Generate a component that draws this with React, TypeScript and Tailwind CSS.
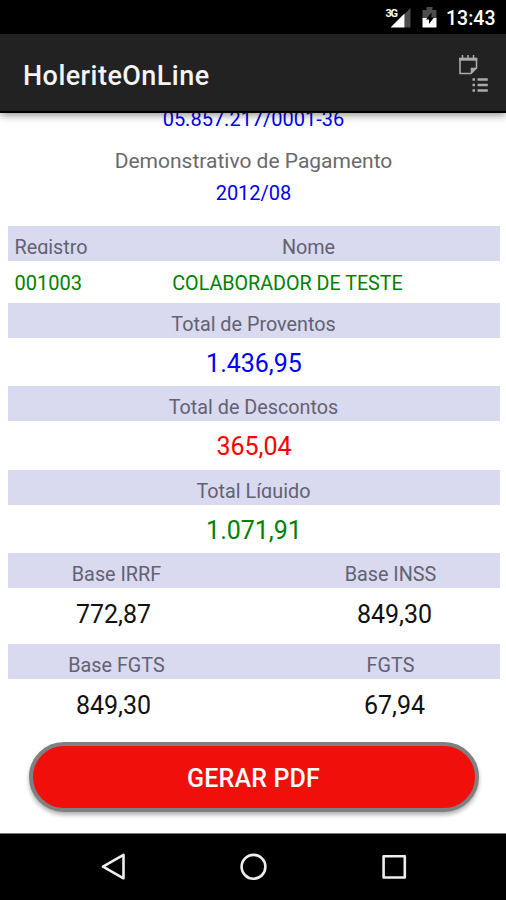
import type { ReactNode } from 'react'
import { clsx } from 'clsx'

const totals = [
  { label: 'Total de Proventos', value: '1.436,95', color: 'text-[#0000f0]' },
  { label: 'Total de Descontos', value: '365,04', color: 'text-[#fb0000]' },
  { label: 'Total Líquido', value: '1.071,91', color: 'text-[#008000]' },
]

const bases = [
  [
    { label: 'Base IRRF', value: '772,87' },
    { label: 'Base INSS', value: '849,30' },
  ],
  [
    { label: 'Base FGTS', value: '849,30' },
    { label: 'FGTS', value: '67,94' },
  ],
]

function StatusBar() {
  return (
    <div className="flex h-[34px] shrink-0 items-center justify-end bg-black pr-[11px] text-white">
      <svg width="74" height="34" viewBox="371 0 74 34" className="shrink-0">
        {/* signal */}
        <path d="M404.500 14l6-6v19.500h-6z" fill="#4d4d4d" />
        <path d="M390.500 27.500l14-14v14z" fill="#fff" />
        <text x="385.500" y="16.500" fontSize="11" fontWeight="700" fontFamily="Roboto, sans-serif" fill="#fff" textLength="12.500">
          3G
        </text>
        {/* charging battery */}
        <path d="M422.500 18v-8h4v-3h6v3h4v8z" fill="#4d4d4d" />
        <path d="M422.500 18h14v9.500h-14z" fill="#fff" />
        <path d="M431.500 12.500l-5.500 7h3v4.500l5-6.500h-2.500z" fill="#000" />
      </svg>
      <span className="w-[50px] pt-[3px] pl-[1px] text-[19.500px] font-medium whitespace-nowrap">13:43</span>
    </div>
  )
}

function AppBar() {
  return (
    <header className="z-10 flex h-[79px] shrink-0 items-center justify-between border-b-2 border-black bg-[#222] pl-[23px] pr-[16px] shadow-[0_2px_8px_rgba(0,0,0,0.45)]">
      <h1 className="pt-[8px] text-[27px] font-medium tracking-[0.45px] text-[#f4f4f4]">HoleriteOnLine</h1>
      <svg width="32" height="41" viewBox="458 52 32 41" fill="none" stroke="#aaa">
        <path d="M460 58.500v15h11l5.500-5.500v-9.500z" strokeWidth="1.600" />
        <path d="M459.200 59.300h18" strokeWidth="2.800" />
        <path d="M462.500 55v4M468 55v4M473.500 55v4" strokeWidth="1.500" />
        <path d="M471 73.500v-5.500h5.500z" fill="#aaa" strokeWidth="0.600" />
        <path d="M472.500 79.500h2.500M472.500 85h2.500M472.500 90.500h2.500M477.500 79.500h10.300M477.500 85h10.300M477.500 90.500h10.300" strokeWidth="2.300" />
      </svg>
    </header>
  )
}

// Labels sit low in the bar, so descenders get cut by the inner box
function Bar({ children }: { children: ReactNode }) {
  return (
    <div className="h-[35px] bg-[#d9d9f0] text-[19.800px] text-[#626272]">
      <div className="flex h-[28px] overflow-hidden leading-[43px]">{children}</div>
    </div>
  )
}

function NavBar() {
  return (
    <nav className="flex h-[67px] shrink-0 items-center justify-center border-t border-[#777] bg-black">
      <svg width="320" height="40" viewBox="93 847 320 40" fill="none" stroke="#eee" strokeWidth="2.600" strokeLinejoin="round">
        <path d="M123.500 854.800v23.500l-20.500-11.700z" />
        <circle cx="253.500" cy="866.800" r="11.900" />
        <rect x="383.600" y="856.300" width="21.200" height="21.200" />
      </svg>
    </nav>
  )
}

export default function App() {
  return (
    <div className="flex h-[900px] w-[506px] flex-col overflow-hidden bg-white font-['Roboto',sans-serif]">
      <StatusBar />
      <AppBar />
      <main className="flex-1 overflow-hidden pl-[7.500px] pr-[6.500px]">
        <div className="flex h-[113px] flex-col items-center">
          <span className="-mt-[7px] h-[32px] text-[20px] leading-[27px] text-[#0000f0]">05.857.217/0001-36</span>
          <span className="h-[32px] text-[21px] leading-[47px] text-[#6a6a6a]">Demonstrativo de Pagamento</span>
          <span className="text-[20px] leading-[46px] text-[#0000f0]">2012/08</span>
        </div>
        <Bar>
          <span className="w-[116px] pl-[7px]">Registro</span>
          <span className="w-[370px] text-center">Nome</span>
        </Bar>
        <div className="flex h-[41.500px] text-[20px] leading-[44px] text-[#008000]">
          <span className="w-[116px] pl-[7px]">001003</span>
          <span className="w-[328px] text-center text-[19.700px] leading-[45px]">COLABORADOR DE TESTE</span>
        </div>
        {totals.map(({ label, value, color }) => (
          <section key={label} className="h-[83.600px] text-center">
            <Bar>
              <span className="w-full">{label}</span>
            </Bar>
            <div className={clsx('pl-[1px] text-[25px] leading-[52.500px]', color)}>{value}</div>
          </section>
        ))}
        {bases.map((row) => (
          <section key={row[0].label} className="h-[90.500px] text-center">
            <Bar>
              <div className="flex w-full justify-between">
                {row.map((cell) => (
                  <span key={cell.label} className="w-[218px]">{cell.label}</span>
                ))}
              </div>
            </Bar>
            <div className="flex justify-between text-[25px] leading-[53px] text-[#111]">
              {row.map((cell) => (
                <span key={cell.label} className="w-[211px] pl-[1px]">{cell.value}</span>
              ))}
            </div>
          </section>
        ))}
        <button className="mt-[7.500px] ml-[21px] flex h-[70px] w-[450px] items-center justify-center rounded-[35px] border-4 border-[#808080] bg-[#f10f0b] pt-[3px] text-[25px] font-medium tracking-[0.150px] text-white shadow-[0_3px_4px_rgba(0,0,0,0.3)]">
          GERAR PDF
        </button>
      </main>
      <NavBar />
    </div>
  )
}
